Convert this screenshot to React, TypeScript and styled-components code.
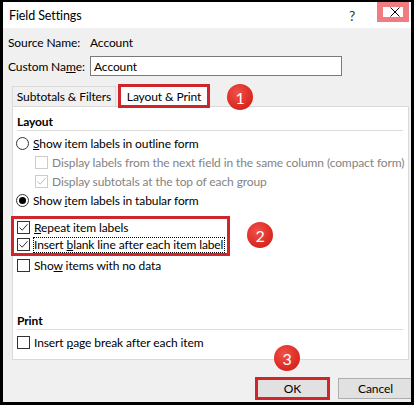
import styled, { createGlobalStyle } from 'styled-components'

const GlobalStyle = createGlobalStyle`
  html, body {
    margin: 0;
    padding: 0;
    background: #ffffff;
  }
  * {
    box-sizing: border-box;
  }
`;

const Frame = styled.div`
  position: relative;
  width: 414px;
  height: 405px;
  border: 3px solid #000;
  border-top-width: 2px;
  background: #f0f0f0;
  overflow: hidden;
  font-family: 'Segoe UI', Lato, 'Noto Sans', sans-serif;
  font-size: 12px;
  letter-spacing: -0.1px;
  color: #000;
  white-space: nowrap;
`;

const TitleBar = styled.div`
  height: 26px;
  background: #fff;
  display: flex;
  align-items: center;
  padding-left: 6px;
`;

const Title = styled.div`
  flex: 1;
  font-size: 12.5px;
`;

const Help = styled.div`
  width: 28px;
  font-size: 14px;
  color: #333;
`;

const CloseBox = styled.div`
  width: 32px;
  height: 20px;
  margin-right: 2px;
  align-self: flex-start;
  background: #f07c81;
  padding: 5px 6px;
  display: flex;
`;

const CloseInner = styled.div`
  flex: 1;
  background: #fff;
  display: flex;
  align-items: center;
  justify-content: flex-end;
  padding-right: 3px;
`;

const Body = styled.div`
  padding: 4px 0 0 5px;
  display: flex;
  flex-direction: column;
`;

const FieldRow = styled.div`
  height: 20px;
  display: flex;
  align-items: center;
  margin-bottom: 4px;
`;

const FieldLabel = styled.span`
  width: 82px;
`;

const Input = styled.div`
  width: 252px;
  height: 20px;
  border: 1px solid #7a7a7a;
  background: #fff;
  padding-left: 3px;
  display: flex;
  align-items: center;
`;

const TabStrip = styled.div`
  display: flex;
  align-items: flex-end;
  margin-top: 4px;
  margin-left: 4px;
  height: 22px;
  position: relative;
  z-index: 1;
`;

const Tab = styled.div<{ $active?: boolean }>`
  display: flex;
  align-items: center;
  justify-content: center;
  width: ${p => (p.$active ? '92px' : '104px')};
  height: ${p => (p.$active ? '24px' : '20px')};
  margin-left: ${p => (p.$active ? '2px' : '0')};
  margin-bottom: ${p => (p.$active ? '-2px' : '0')};
  background: ${p => (p.$active ? '#fff' : '#f0f0f0')};
  border: ${p => (p.$active ? '3px solid #d0262b' : '1px solid #dadada')};
  border-bottom: ${p => (p.$active ? '3px solid #d0262b' : 'none')};
`;

const Panel = styled.div`
  margin-left: 4px;
  width: 397px;
  height: 254px;
  background: #fff;
  border: 1px solid #dadada;
  padding: 5px 5px 0 4px;
  display: flex;
  flex-direction: column;
`;

const SectionHead = styled.div<{ $gap?: number }>`
  height: 19px;
  margin-top: ${p => p.$gap ?? 0}px;
  display: flex;
  align-items: center;
  font-weight: bold;
  border-bottom: 1px solid #dcdcdc;
  margin-bottom: 3px;
`;

const Row = styled.label<{ $indent?: number; $h?: number; $disabled?: boolean }>`
  display: flex;
  align-items: center;
  gap: 4px;
  height: ${p => p.$h ?? 19}px;
  padding-left: ${p => p.$indent ?? 0}px;
  color: ${p => (p.$disabled ? '#838383' : '#000')};
`;

const Box = styled.span<{ $disabled?: boolean }>`
  width: 13px;
  height: 13px;
  border: 1px solid ${p => (p.$disabled ? '#cccccc' : '#333')};
  background: #fff;
  display: flex;
  align-items: center;
  justify-content: center;
  flex: none;
`;

const Radio = styled.span<{ $on?: boolean }>`
  width: 13px;
  height: 13px;
  border-radius: 50%;
  border: 1px solid #333;
  background: #fff;
  display: flex;
  align-items: center;
  justify-content: center;
  flex: none;
  margin-left: -1px;
  &::after {
    content: '';
    display: ${p => (p.$on ? 'block' : 'none')};
    width: 7px;
    height: 7px;
    border-radius: 50%;
    background: #000;
  }
`;

const Mark = styled.div`
  margin: 6px 0 0 -6px;
  width: 219px;
  border: 3px solid #d0262b;
  padding-left: 3px;
`;

const Focus = styled.span`
  outline: 1px dotted #000;
  padding-right: 1px;
  line-height: 14px;
`;

const ButtonRow = styled.div`
  display: flex;
  justify-content: flex-end;
  align-items: center;
  gap: 8px;
  margin-top: 17px;
  margin-right: -2px;
  height: 23px;
`;

const Button = styled.div<{ $marked?: boolean }>`
  width: 75px;
  height: ${p => (p.$marked ? '23px' : '21px')};
  display: flex;
  align-items: center;
  justify-content: center;
  background: #e1e1e1;
  border: ${p => (p.$marked ? '3px solid #d0262b' : '1px solid #adadad')};
`;

const Badge = styled.div<{ $x: number; $y: number }>`
  position: absolute;
  left: ${p => p.$x}px;
  top: ${p => p.$y}px;
  width: 26px;
  height: 26px;
  border-radius: 50%;
  background: radial-gradient(circle at 40% 35%, #f0514a, #d9261f 70%);
  color: #fff;
  font-size: 16px;
  display: flex;
  align-items: center;
  justify-content: center;
  z-index: 2;
`;

const Check = ({ color = '#333' }: { color?: string }) => (
  <svg width="11" height="11" viewBox="0 0 11 11">
    <path d="M1.5 5.5 L4.2 8.2 L9.5 2.2" fill="none" stroke={color} strokeWidth="1" />
  </svg>
);

function App() {
  return (
    <Frame>
      <GlobalStyle />
      <TitleBar>
        <Title>Field Settings</Title>
        <Help>?</Help>
        <CloseBox>
          <CloseInner>
            <svg width="10" height="10" viewBox="0 0 10 10">
              <path d="M0.5 0.5 L9.5 9.5 M9.5 0.5 L0.5 9.5" stroke="#000" strokeWidth="1" />
            </svg>
          </CloseInner>
        </CloseBox>
      </TitleBar>
      <Body>
        <FieldRow>
          <FieldLabel>Source Name:</FieldLabel>
          <span>Account</span>
        </FieldRow>
        <FieldRow>
          <FieldLabel>Custom Na<u>m</u>e:</FieldLabel>
          <Input>Account</Input>
        </FieldRow>
        <TabStrip>
          <Tab>Subtotals &amp; Filters</Tab>
          <Tab $active>Layout &amp; Print</Tab>
        </TabStrip>
        <Panel>
          <SectionHead>Layout</SectionHead>
          <Row>
            <Radio />
            <span><u>S</u>how item labels in outline form</span>
          </Row>
          <Row $indent={18} $disabled>
            <Box $disabled />
            <span>Display labels from the next field in the same column (compact form)</span>
          </Row>
          <Row $indent={18} $disabled>
            <Box $disabled><Check color="#bbbbbb" /></Box>
            <span>Display subtotals at the top of each group</span>
          </Row>
          <Row>
            <Radio $on />
            <span>Show <u>i</u>tem labels in tabular form</span>
          </Row>
          <Mark>
            <Row $h={17}>
              <Box><Check /></Box>
              <span><u>R</u>epeat item labels</span>
            </Row>
            <Row $h={17}>
              <Box><Check /></Box>
              <Focus>Insert <u>b</u>lank line after each item label</Focus>
            </Row>
          </Mark>
          <Row>
            <Box />
            <span>Sho<u>w</u> items with no data</span>
          </Row>
          <SectionHead $gap={36}>Print</SectionHead>
          <Row>
            <Box />
            <span>Insert <u>p</u>age break after each item</span>
          </Row>
        </Panel>
        <ButtonRow>
          <Button $marked>OK</Button>
          <Button>Cancel</Button>
        </ButtonRow>
      </Body>
      <Badge $x={224} $y={82}>1</Badge>
      <Badge $x={244} $y={220}>2</Badge>
      <Badge $x={271} $y={343}>3</Badge>
    </Frame>
  );
}

export default App
